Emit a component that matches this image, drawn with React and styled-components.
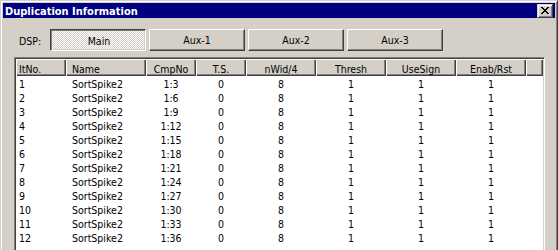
import React from "react";
import styled, { createGlobalStyle } from "styled-components";

const FONT = `"DejaVu Sans Condensed", "Liberation Sans", sans-serif`;

const Global = createGlobalStyle`
  html, body { margin: 0; padding: 0; background: #d4d0c8; }
  body { font-family: ${FONT}; font-size: 10.5px; color: #000; }
`;

const Viewport = styled.div`
  width: 558px;
  height: 250px;
  overflow: hidden;
`;

const Window = styled.div`
  box-sizing: border-box;
  width: 558px;
  height: 290px;
  border: 1px solid;
  border-color: #d4d0c8 #404040 #404040 #d4d0c8;
  box-shadow: inset 1px 1px #fff, inset -1px -1px #808080;
  padding: 2px;
  background: #d4d0c8;
  display: flex;
  flex-direction: column;
`;

const TitleBar = styled.div`
  height: 18px;
  background: #000080;
  color: #fff;
  display: flex;
  align-items: center;
  justify-content: space-between;
  padding: 0 2px 0 2px;
`;

const Title = styled.span`
  font-weight: bold;
  font-size: 11px;
  padding-top: 1px;
`;

const CloseBtn = styled.div`
  box-sizing: border-box;
  width: 16px;
  height: 14px;
  background: #d4d0c8;
  border: 1px solid;
  border-color: #d4d0c8 #404040 #404040 #d4d0c8;
  box-shadow: inset 1px 1px #fff, inset -1px -1px #808080;
  display: flex;
  align-items: center;
  justify-content: center;
`;

const Body = styled.div`
  display: flex;
  flex-direction: column;
  padding: 11px 0 0 11px;
`;

const DspRow = styled.div`
  display: flex;
  align-items: center;
  gap: 3px;
  padding-left: 5px;
  height: 22px;
`;

const Label = styled.span`
  width: 28px;
  padding-top: 1px;
`;

const Button = styled.div`
  box-sizing: border-box;
  width: 96px;
  height: 22px;
  display: flex;
  align-items: center;
  justify-content: center;
  border: 1px solid;
  border-color: ${(p) => (p.$pressed ? "#404040 #fff #fff #404040" : "#fff #404040 #404040 #fff")};
  box-shadow: ${(p) =>
    p.$pressed
      ? "inset 1px 1px #808080, inset -1px -1px #d4d0c8"
      : "inset -1px -1px #808080"};
  background-color: #d4d0c8;
  background-image: ${(p) =>
    p.$pressed
      ? "conic-gradient(#fff 25%, #d4d0c8 0 50%, #fff 0 75%, #d4d0c8 0)"
      : "none"};
  background-size: 2px 2px;
  padding-top: ${(p) => (p.$pressed ? "2px" : "0")};
  padding-left: ${(p) => (p.$pressed ? "2px" : "0")};
`;

const List = styled.div`
  box-sizing: border-box;
  margin-top: 6px;
  width: 531px;
  height: 230px;
  border: 1px solid;
  border-color: #808080 #fff #fff #808080;
  box-shadow: inset 1px 1px #404040, inset -1px -1px #d4d0c8;
  padding: 1px;
  background: #fff;
`;

const COLS = "50px 80px 50px 50px 70px 70px 70px 70px 1fr";

const Header = styled.div`
  display: grid;
  grid-template-columns: ${COLS};
  height: 17px;
`;

const HeadCell = styled.div`
  box-sizing: border-box;
  height: 17px;
  line-height: 17px;
  padding-top: 2px;
  background: #d4d0c8;
  box-shadow: inset 1px 1px #fff, inset -1px -1px #404040, inset -2px -2px #808080;
  padding-left: ${(p) => (p.$align === "left" ? p.$pad : "0")};
  text-align: ${(p) => p.$align};
  white-space: nowrap;
  overflow: hidden;
`;

const Row = styled.div`
  display: grid;
  grid-template-columns: ${COLS};
  height: 14px;
`;

const Cell = styled.div`
  box-sizing: border-box;
  height: 14px;
  line-height: 14px;
  padding-top: 1px;
  padding-left: ${(p) => (p.$align === "left" ? p.$pad : "0")};
  text-align: ${(p) => p.$align};
  white-space: nowrap;
`;

const columns = [
  { title: "ItNo.", align: "left", pad: "3px" },
  { title: "Name", align: "left", pad: "6px" },
  { title: "CmpNo", align: "center" },
  { title: "T.S.", align: "center" },
  { title: "nWid/4", align: "center" },
  { title: "Thresh", align: "center" },
  { title: "UseSign", align: "center" },
  { title: "Enab/Rst", align: "center" },
];

const rows = Array.from({ length: 12 }, (_, i) => [
  String(i + 1),
  "SortSpike2",
  `1:${(i + 1) * 3}`,
  "0",
  "8",
  "1",
  "1",
  "1",
]);

const CloseIcon = () => (
  <svg width="8" height="7" viewBox="0 0 8 7" shapeRendering="crispEdges">
    <path
      d="M0 0h2v1h1v1h2V1h1V0h2v1H7v1H6v1H5v1h1v1h1v1h1v1H6V6H5V5H3v1H2v1H0V6h1V5h1V4h1V3H2V2H1V1H0z"
      fill="#000"
    />
  </svg>
);

export default function App() {
  return (
    <Viewport>
      <Global />
      <Window>
        <TitleBar>
          <Title>Duplication Information</Title>
          <CloseBtn>
            <CloseIcon />
          </CloseBtn>
        </TitleBar>
        <Body>
          <DspRow>
            <Label>DSP:</Label>
            <Button $pressed>Main</Button>
            <Button>Aux-1</Button>
            <Button>Aux-2</Button>
            <Button>Aux-3</Button>
          </DspRow>
          <List>
            <Header>
              {columns.map((c) => (
                <HeadCell key={c.title} $align={c.align} $pad={c.pad}>
                  {c.title}
                </HeadCell>
              ))}
              <HeadCell $align="left" />
            </Header>
            {rows.map((r, i) => (
              <Row key={i}>
                {r.map((v, j) => (
                  <Cell key={j} $align={columns[j].align} $pad={columns[j].pad}>
                    {v}
                  </Cell>
                ))}
                <Cell $align="left" />
              </Row>
            ))}
          </List>
        </Body>
      </Window>
    </Viewport>
  );
}
